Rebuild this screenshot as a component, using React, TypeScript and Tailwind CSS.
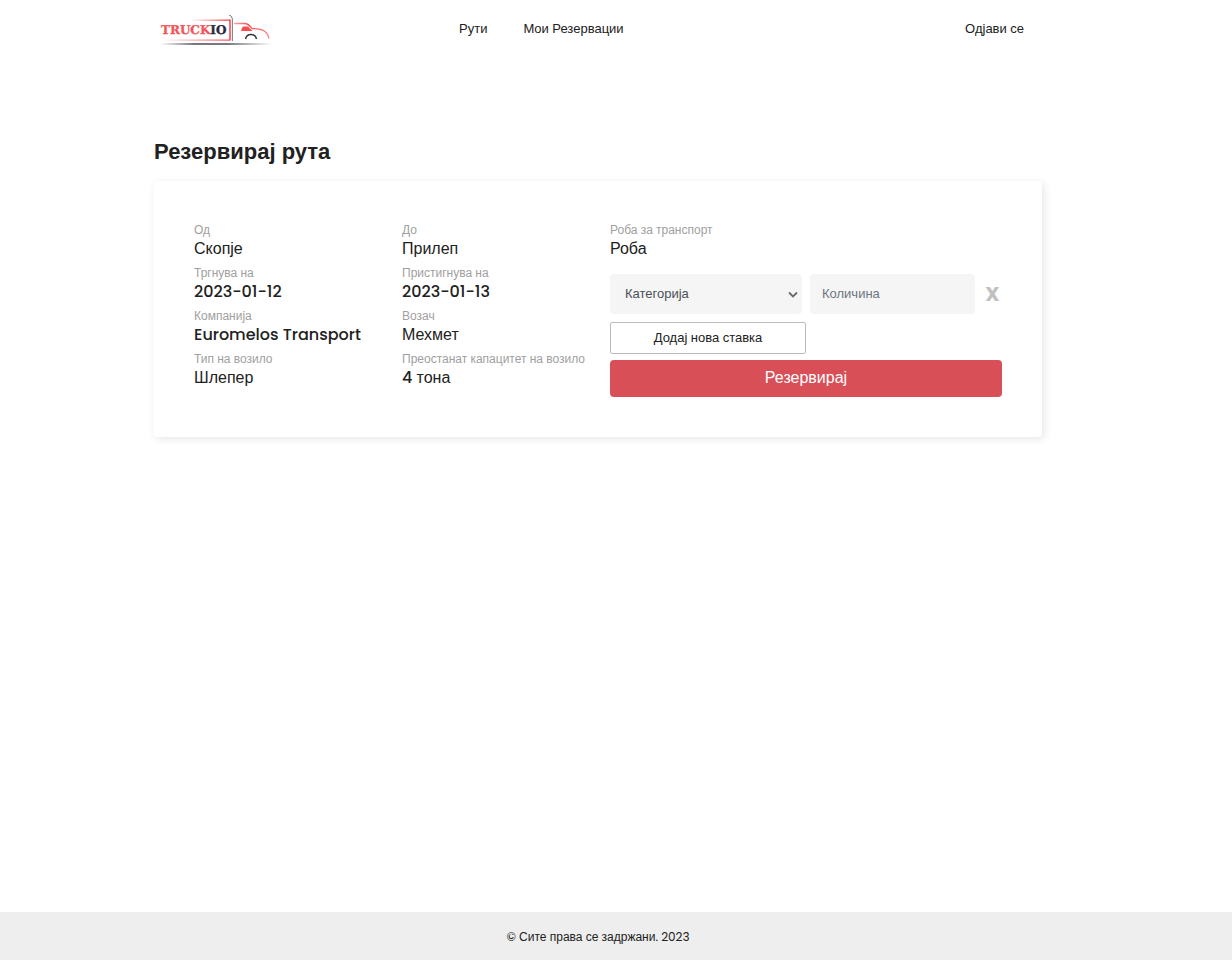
import { useState } from 'react'

const routeDetails = [
    { label: 'Од', value: 'Скопје' },
    { label: 'До', value: 'Прилеп' },
    { label: 'Тргнува на', value: '2023-01-12' },
    { label: 'Пристигнува на', value: '2023-01-13' },
    { label: 'Компанија', value: 'Euromelos Transport' },
    { label: 'Возач', value: 'Мехмет' },
    { label: 'Тип на возило', value: 'Шлепер' },
    { label: 'Преостанат капацитет на возило', value: '4 тона' },
]

function Logo() {
    return (
        <svg width="112" height="34" viewBox="0 0 112 34" aria-label="Truckio">
            <defs>
                <linearGradient id="redLine" x1="0" x2="1">
                    <stop offset="0" stopColor="#fb4d50" stopOpacity="0" />
                    <stop offset="1" stopColor="#fb4d50" />
                </linearGradient>
                <linearGradient id="ground" x1="0" x2="1">
                    <stop offset="0" stopColor="#77797e" stopOpacity="0" />
                    <stop offset="0.3" stopColor="#77797e" />
                    <stop offset="0.6" stopColor="#77797e" />
                    <stop offset="1" stopColor="#77797e" stopOpacity="0" />
                </linearGradient>
                <linearGradient id="hood" x1="0" x2="1">
                    <stop offset="0" stopColor="#fb4d50" stopOpacity="0.5" />
                    <stop offset="0.4" stopColor="#fb4d50" />
                    <stop offset="1" stopColor="#fb4d50" stopOpacity="0.7" />
                </linearGradient>
            </defs>
            <rect x="30" y="4.5" width="40" height="1.4" fill="url(#redLine)" />
            <rect x="2" y="24.5" width="68" height="1.2" fill="url(#redLine)" />
            <path d="M70 4.5v21" stroke="#fb4d50" strokeWidth="1.6" />
            <path d="M69 0q3 .5 3.4 4v22" fill="none" stroke="#777a82" />
            <text
                x="1"
                y="19"
                fontFamily="'DejaVu Serif', serif"
                fontSize="12"
                fontWeight="700"
                fill="#f25558"
                stroke="#f25558"
                strokeWidth="0.3"
                textRendering="geometricPrecision"
            >
                TRUCK
                <tspan fill="#292b3c" stroke="#292b3c">
                    IO
                </tspan>
            </text>
            <path
                d="M74 8.5h10c4 0 6 2 8 5 8 0 15 1 17 10"
                fill="none"
                stroke="url(#hood)"
                strokeWidth="1.3"
            />
            <path d="M83 11.5h5l4.5 4.5H81q.5-3 2-4.5z" fill="#fb4d50" />
            <path
                d="M85.5 24a5.6 5.6 0 0 1 11 0"
                fill="none"
                stroke="#33343c"
                strokeWidth="1.5"
            />
            <rect x="0" y="28" width="112" height="2" fill="url(#ground)" />
        </svg>
    )
}

function Header() {
    return (
        <header className="mx-auto flex h-[60px] w-full max-w-[888px] items-start text-[13px] leading-5">
            <a href="#" className="ml-1.5 mt-[15px] w-[280px]">
                <Logo />
            </a>
            <nav className="mt-[19px] flex flex-1 gap-9 pl-[19px]">
                <a href="#">Рути</a>
                <a href="#">Мои Резервации</a>
            </nav>
            <a href="#" className="mr-[18px] mt-[19px]">
                Одјави се
            </a>
        </header>
    )
}

function ReservationForm() {
    const [category, setCategory] = useState('')
    const [quantity, setQuantity] = useState('')

    return (
        <form
            className="col-span-2 flex flex-col"
            onSubmit={(e) => e.preventDefault()}
        >
            <p className="text-xs leading-[18px] text-[#a0a0a0]">
                Роба за транспорт
            </p>
            <p className="leading-5">Роба</p>
            <div className="mt-[15px] flex items-center gap-2 text-[13px]">
                <div className="relative w-48">
                    <select
                        aria-label="Категорија"
                        value={category}
                        onChange={(e) => setCategory(e.target.value)}
                        className="h-10 w-full appearance-none rounded bg-[#f5f5f5] pl-[15px] text-[#495057]"
                    >
                        <option value="">Категорија</option>
                    </select>
                    <svg
                        className="pointer-events-none absolute right-1 top-[17px]"
                        width="10"
                        height="8"
                        viewBox="0 0 10 8"
                        fill="none"
                        stroke="#6a6a6a"
                        strokeWidth="1.8"
                    >
                        <path d="M1 1.5l4 4 4-4" />
                    </svg>
                </div>
                <input
                    aria-label="Количина"
                    placeholder="Количина"
                    value={quantity}
                    onChange={(e) => setQuantity(e.target.value)}
                    className="h-10 w-0 flex-1 rounded bg-[#f5f5f5] px-3 placeholder:text-[#6c757d]"
                />
                <button
                    type="button"
                    className="w-[19px] text-center text-xl font-bold text-[#c0c0c0]"
                >
                    X
                </button>
            </div>
            <button
                type="button"
                className="mt-2 h-8 w-1/2 rounded-xs border border-[#bcbcbc] text-[13px]"
            >
                Додај нова ставка
            </button>
            <button
                type="submit"
                className="mt-1.5 h-[37px] rounded bg-[#d84f57] pb-0.5 text-white"
            >
                Резервирај
            </button>
        </form>
    )
}

export default function App() {
    return (
        <div className="flex min-h-screen flex-col bg-white font-['Poppins','Liberation_Sans',Arial,sans-serif] text-base text-[#212121]">
            <div className="flex-1 pr-9">
                <Header />
                <main className="mx-auto w-full max-w-[888px] pt-[76px]">
                    <h1 className="font-['Liberation_Sans',Arial,sans-serif] text-[22px] font-bold leading-8">
                        Резервирај рута
                    </h1>
                    <section className="mt-[13px] grid grid-cols-4 gap-6 rounded bg-white p-10 shadow-[2px_2px_8px_rgba(0,0,0,0.1)]">
                        <dl className="col-span-2 grid grid-cols-2 content-start gap-x-6 gap-y-[5px]">
                            {routeDetails.map((itm) => (
                                <div key={itm.label}>
                                    <dt className="whitespace-nowrap text-xs leading-[18px] text-[#a0a0a0]">
                                        {itm.label}
                                    </dt>
                                    <dd className="whitespace-nowrap font-medium leading-5">
                                        {itm.value}
                                    </dd>
                                </div>
                            ))}
                        </dl>
                        <ReservationForm />
                    </section>
                </main>
            </div>
            <footer className="flex h-12 items-center justify-center bg-[#eee] pr-9 pt-0.5 text-xs">
                © Сите права се задржани. 2023
            </footer>
        </div>
    )
}
